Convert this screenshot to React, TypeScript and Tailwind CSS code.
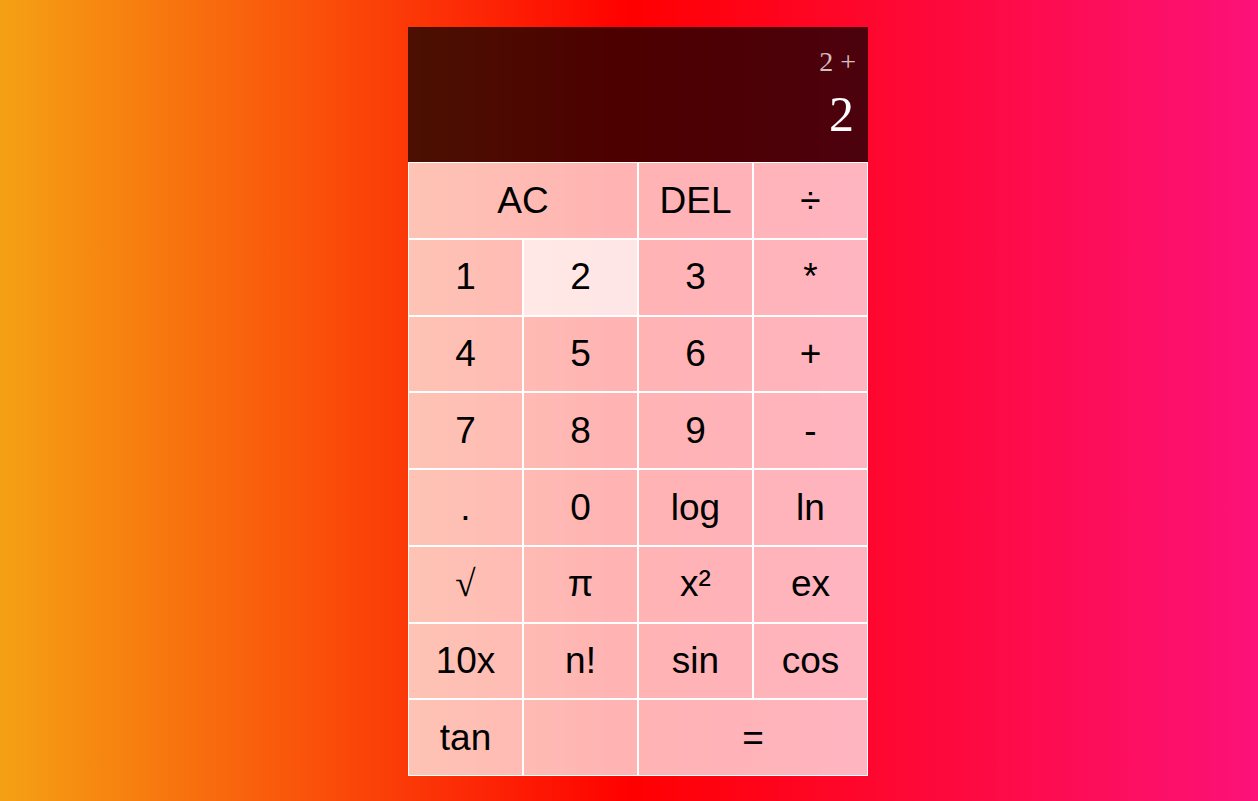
const keys: { label: string; span?: string; active?: boolean; serif?: boolean }[] = [
  { label: 'AC', span: 'col-span-2' },
  { label: 'DEL' },
  { label: '÷' },
  { label: '1' },
  { label: '2', active: true },
  { label: '3' },
  { label: '*' },
  { label: '4' },
  { label: '5' },
  { label: '6' },
  { label: '+' },
  { label: '7' },
  { label: '8' },
  { label: '9' },
  { label: '-' },
  { label: '.' },
  { label: '0' },
  { label: 'log' },
  { label: 'ln' },
  { label: '√', serif: true },
  { label: 'π' },
  { label: 'x²' },
  { label: 'ex' },
  { label: '10x' },
  { label: 'n!' },
  { label: 'sin' },
  { label: 'cos' },
  { label: 'tan' },
  { label: '' },
  { label: '=', span: 'col-span-2' },
];

export default function App() {
  return (
    <div className="min-h-screen w-full flex items-center justify-center pl-[18px] pt-[2px] bg-[linear-gradient(to_right,#f5a114,#ff0000,#fc1279)]">
      <div className="grid grid-cols-[repeat(4,115px)] grid-rows-[135px_repeat(8,76.75px)]">
        <div className="col-span-4 bg-black/70 flex flex-col items-end justify-around pl-[12px] pr-[14px] pt-[14px] pb-[16px] [font-family:'Liberation_Serif',serif] break-all">
          <div className="text-[28px] leading-none text-white/75 mr-[-2px]">2 +</div>
          <div className="text-[50px] leading-none text-white">2</div>
        </div>
        {keys.map((k, i) => (
          <button
            key={i}
            className={`${k.span ?? ''} border border-white text-[37px] text-black cursor-pointer outline-none ${
              k.serif ? "[font-family:'Liberation_Serif',serif]" : "[font-family:'Liberation_Sans',Arial,sans-serif]"
            } ${k.active ? 'bg-white/90' : 'bg-white/70 hover:bg-white/90'}`}
          >
            {k.label}
          </button>
        ))}
      </div>
    </div>
  );
}
